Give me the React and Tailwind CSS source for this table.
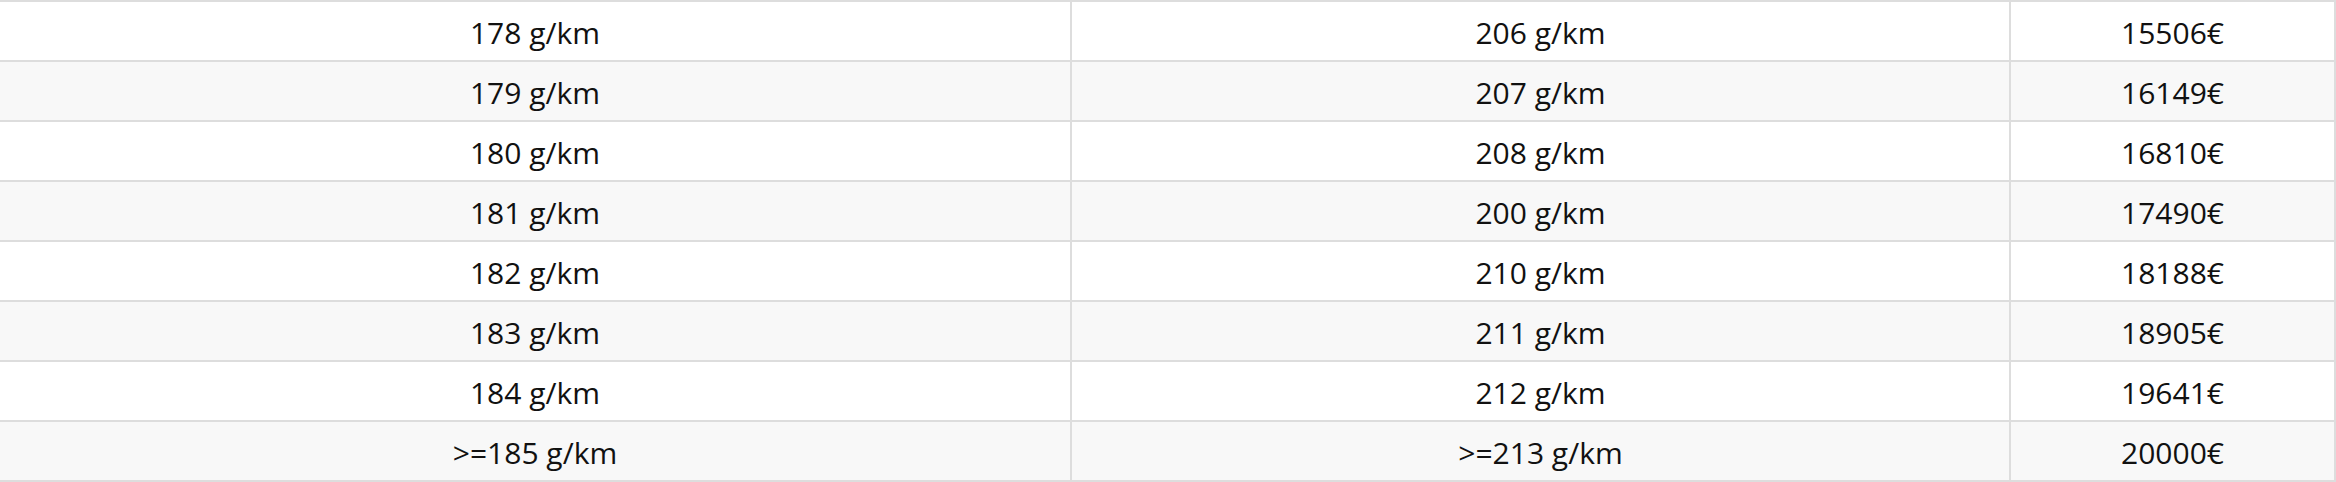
const rows = [
  ['178 g/km', '206 g/km', '15506€'],
  ['179 g/km', '207 g/km', '16149€'],
  ['180 g/km', '208 g/km', '16810€'],
  ['181 g/km', '200 g/km', '17490€'],
  ['182 g/km', '210 g/km', '18188€'],
  ['183 g/km', '211 g/km', '18905€'],
  ['184 g/km', '212 g/km', '19641€'],
  ['>=185 g/km', '>=213 g/km', '20000€'],
];

export default function App() {
  return (
    <div
      className="w-[2336px] bg-white text-[30px] leading-none text-[#111]"
      style={{ fontFamily: '"Open Sans", sans-serif' }}
    >
      <div className="grid grid-cols-[1072px_939px_325px] border-t-2 border-[#dddddd]">
        {rows.map((row, i) =>
          row.map((cell, j) => (
            <div
              key={i + '-' + j}
              className={
                'flex h-[60px] items-center justify-center border-b-2 border-r-2 border-[#dddddd] pt-[3px] ' +
                (i % 2 === 1 ? 'bg-[#f8f8f8]' : 'bg-white')
              }
            >
              {cell}
            </div>
          ))
        )}
      </div>
    </div>
  );
}
